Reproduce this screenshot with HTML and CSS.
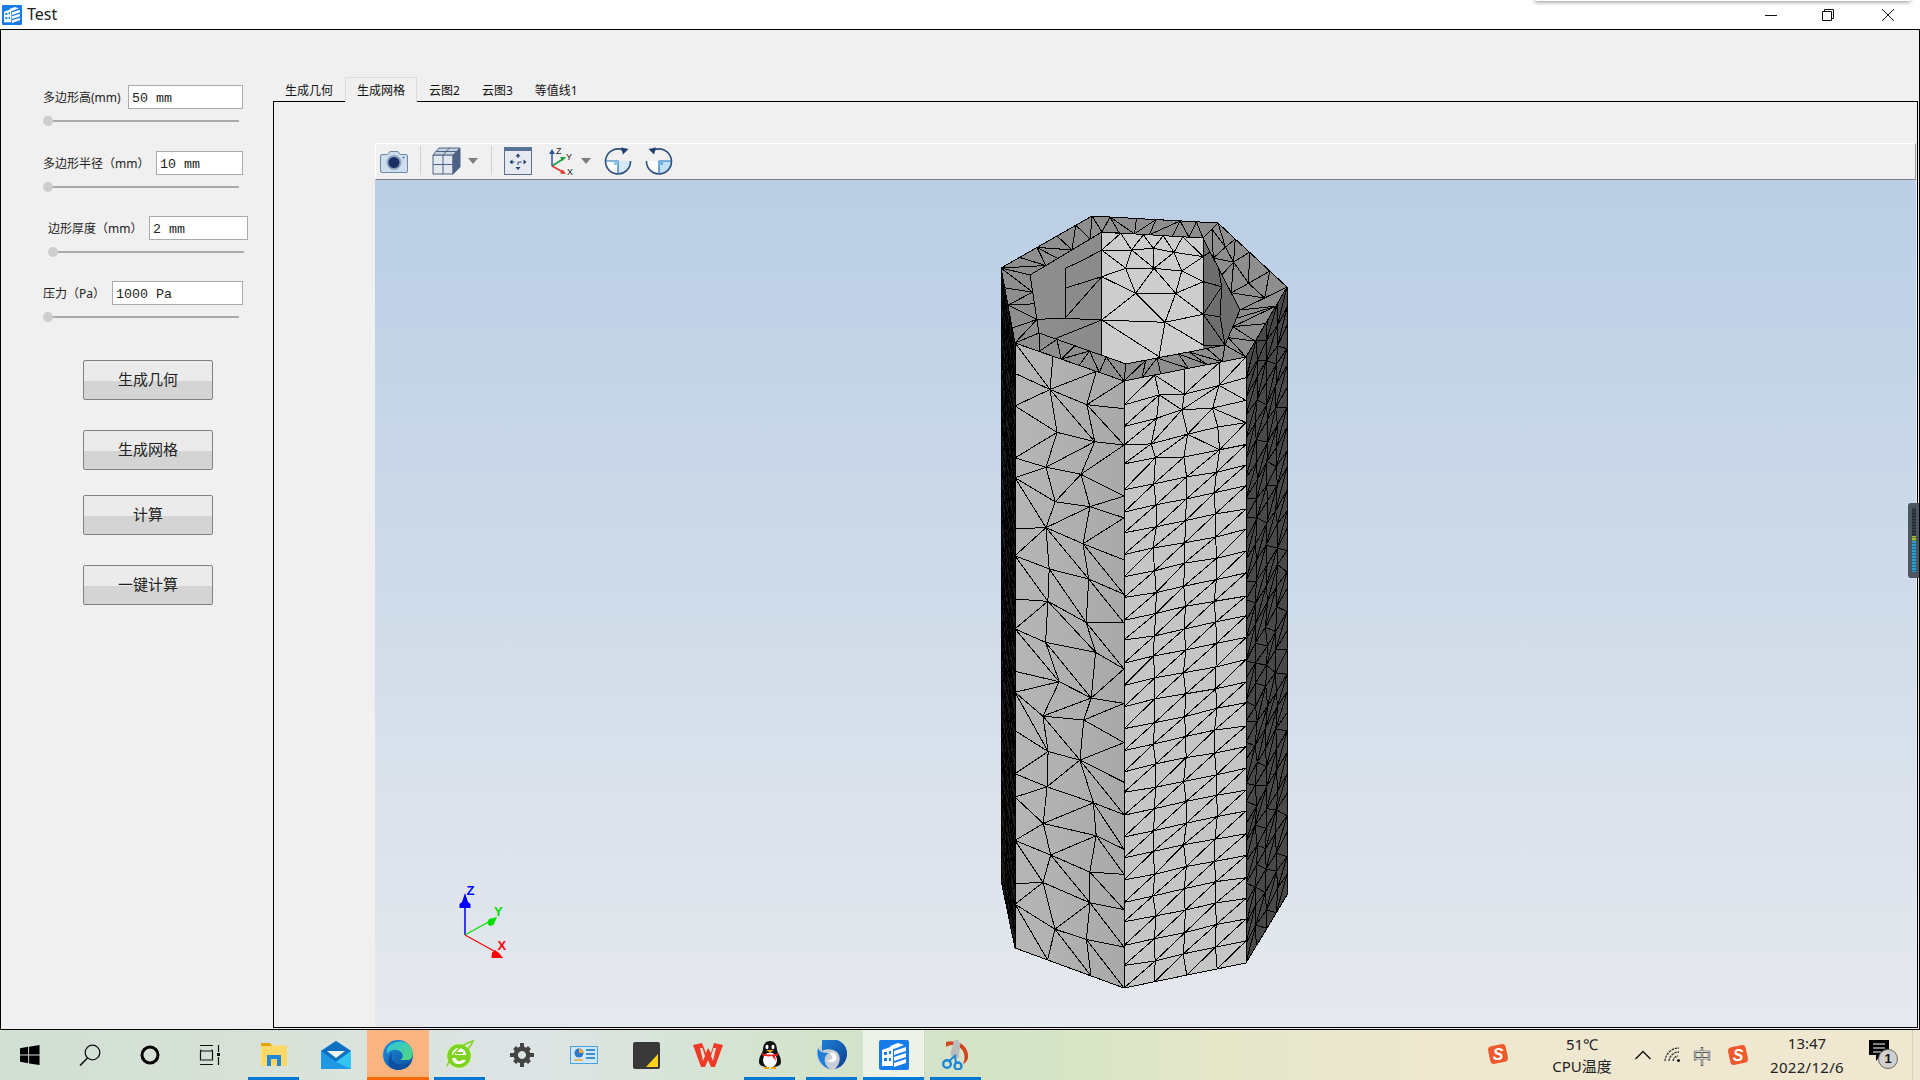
FILE: index.html
```html
<!DOCTYPE html>
<html lang="zh-CN">
<head>
<meta charset="utf-8">
<title>Test</title>
<link rel="stylesheet" href="styles.css">
</head>
<body>
<svg class="defs" width="0" height="0" aria-hidden="true">
  <defs>
    <symbol id="app" viewBox="0 0 30 30">
      <rect width="30" height="30" rx="2" fill="#167cec"/>
      <path d="M3 10 L14 6 V26 H3 Z" fill="#fff"/>
      <path d="M5 12h3v3H5zM10 11h2v3h-2zM5 18h3v3H5zM10 18h2v3h-2z" fill="#167cec"/>
      <path d="M11 6 L19 3 L25 5 L15 9 Z" fill="#fff"/>
      <path d="M15 11 L27 7 V11 L15 15 Z M15 17 L27 13 V17 L15 21 Z M15 23 L27 19 V23 L15 27 Z" fill="#fff"/>
    </symbol>
    <symbol id="sogou" viewBox="0 0 24 24">
      <rect x="3" y="3" width="18" height="18" rx="4" fill="#f0592b" transform="rotate(-12 12 12)"/>
      <text x="12" y="18" text-anchor="middle" class="sogou-s">S</text>
    </symbol>
    <linearGradient id="edgeA" x1="0" y1="0" x2="1" y2="1"><stop offset="0" stop-color="#2fc4e0"/><stop offset="1" stop-color="#55d67a"/></linearGradient>
    <linearGradient id="edgeB" x1="0" y1="0" x2="1" y2="1"><stop offset="0" stop-color="#1f8fe0"/><stop offset="1" stop-color="#0c4f9c"/></linearGradient>
    <linearGradient id="swirl" x1="0" y1="0" x2="1" y2="1"><stop offset="0" stop-color="#1d7fd8"/><stop offset="1" stop-color="#0c3f8a"/></linearGradient>
    <linearGradient id="leftFace" x1="0" y1="0" x2="1" y2="0"><stop offset="0" stop-color="#b6b6b6"/><stop offset="1" stop-color="#a9a9a9"/></linearGradient>
    <linearGradient id="leftWall" x1="0" y1="0" x2="1" y2="0"><stop offset="0" stop-color="#8f8f8f"/><stop offset="1" stop-color="#8a8a8a"/></linearGradient>
    <linearGradient id="mailG" x1="0" y1="0" x2="1" y2="1"><stop offset="0" stop-color="#1c9be6"/><stop offset="1" stop-color="#34c6f5"/></linearGradient>
  </defs>
</svg>

<header class="titlebar">
  <svg class="title-icon"><use href="#app"/></svg>
  <span class="title-text">Test</span>
  <div class="win-controls">
    <svg class="win-btn" viewBox="0 0 14 14"><path d="M1 7.5H13" stroke="#111" fill="none"/></svg>
    <svg class="win-btn" viewBox="0 0 14 14"><path d="M1.5 3.5H10.5V12.5H1.5Z M3.5 3.5V1.5H12.5V10.5H10.5" stroke="#111" fill="none"/></svg>
    <svg class="win-btn" viewBox="0 0 14 14"><path d="M1 1L13 13M13 1L1 13" stroke="#111" fill="none"/></svg>
  </div>
  <div class="shadow-strip"></div>
</header>

<main class="window">
  <aside class="panel">
    <section class="param">
      <div class="param-row"><span class="param-label">多边形高(mm)</span><div class="field w115">50 mm</div></div>
      <div class="slider"><i class="thumb"></i><i class="track"></i></div>
    </section>
    <section class="param second">
      <div class="param-row"><span class="param-label">多边形半径（mm）</span><div class="field w87">10 mm</div></div>
      <div class="slider"><i class="thumb"></i><i class="track"></i></div>
    </section>
    <section class="param shifted">
      <div class="param-row"><span class="param-label">边形厚度（mm）</span><div class="field w99">2 mm</div></div>
      <div class="slider"><i class="thumb"></i><i class="track"></i></div>
    </section>
    <section class="param">
      <div class="param-row"><span class="param-label">压力（Pa）</span><div class="field w131">1000 Pa</div></div>
      <div class="slider"><i class="thumb"></i><i class="track"></i></div>
    </section>
    <div class="actions">
      <button class="action gap30">生成几何</button>
      <button class="action gap25">生成网格</button>
      <button class="action gap30">计算</button>
      <button class="action">一键计算</button>
    </div>
  </aside>

  <section class="tabs">
    <nav class="tabbar">
      <span class="tab">生成几何</span>
      <span class="tab active">生成网格</span>
      <span class="tab tight">云图2</span>
      <span class="tab tight">云图3</span>
      <span class="tab tight">等值线1</span>
    </nav>
    <div class="pane">
      <div class="viewer">
        <div class="toolbar">
          <svg class="tool t-cam" viewBox="0 0 28 26">
            <path d="M2 6.5H8L10 3.5H18L20 6.5H26Q27.5 6.500 27.5 8V23Q27.500 24.500 26 24.500H2Q.5 24.500 .5 23V8Q.5 6.500 2 6.500Z" fill="#cfdeee" stroke="#6f88a8"/>
            <circle cx="14" cy="14.500" r="7.500" fill="#8fa4bf"/><circle cx="14" cy="14.500" r="5.500" fill="#1b2f66"/>
            <circle cx="23.500" cy="9.500" r="1" fill="#5b7597"/>
          </svg>
          <i class="sep s1"></i>
          <svg class="tool t-cube" viewBox="0 0 29 28">
            <path d="M1 8H21V27H1Z" fill="#e3e7ee" stroke="#4d6285"/>
            <path d="M1 8L7 1H28L21 8Z" fill="#c9d1dd" stroke="#4d6285"/>
            <path d="M21 8L28 1V20L21 27Z" fill="#4d6285" stroke="#4d6285"/>
            <path d="M1 17.500H21M11 8V27M4 4.500H24.500M11 8L17.500 1" fill="none" stroke="#4d6285"/>
          </svg>
          <i class="drop d1"></i>
          <i class="sep s2"></i>
          <svg class="tool t-fit" viewBox="0 0 28 28">
            <rect x=".5" y=".5" width="27" height="27" fill="#e6e9ef" stroke="#5a7196"/>
            <rect x="1" y="1" width="26" height="3" fill="#5a7196"/>
            <path d="M14 8V21M7.500 15H20.500" stroke="#1f3f70" stroke-dasharray="3 4" fill="none"/>
            <path d="M14 6.500l-2.500 3h5zM14 23l-2.500-3h5zM5.500 15l3-2.500v5zM22.500 15l-3-2.500v5z" fill="#1f3f70"/>
          </svg>
          <svg class="tool t-axes" viewBox="0 0 32 30">
            <path d="M6 20V6" stroke="#2a53a8" stroke-width="1.500" fill="none"/><path d="M6 3l-3 5h6z" fill="#2a53a8"/>
            <path d="M6 20L17 13" stroke="#1e9a3c" stroke-width="1.500" fill="none"/><path d="M20 11l-6 0 2.500 4z" fill="#1e9a3c"/>
            <path d="M6 20L17 26" stroke="#e0362c" stroke-width="1.500" fill="none"/><path d="M20 28l-6-.5 2.500-4z" fill="#e0362c"/>
            <text x="10" y="8" class="axis-small">Z</text><text x="20" y="14" class="axis-small">Y</text><text x="21" y="29" class="axis-small">X</text>
          </svg>
          <i class="drop d2"></i>
          <svg class="tool t-rot" viewBox="0 0 28 28">
            <path d="M1.500 14H14V26.500A12.500 12.500 0 0 1 1.500 14Z" fill="#fff"/><path d="M14 14H26.500A12.500 12.500 0 0 1 14 26.500Z" fill="#d5e9fa"/>
            <path d="M19 3A12.500 12.500 0 1 0 26.500 14" fill="none" stroke="#2f4f7c" stroke-width="1.600"/>
            <path d="M1.500 14H14V26" fill="none" stroke="#1b6fb8" stroke-width="1.200"/>
            <path d="M24.500 2L17 .5l2 7z" fill="#1f3f70"/><rect x="10" y="14" width="4" height="4" fill="#8cc4ee"/>
          </svg>
          <svg class="tool t-rot2" viewBox="0 0 28 28">
            <path d="M1.500 14H14V26.500A12.500 12.500 0 0 1 1.500 14Z" fill="#fff"/><path d="M14 14H26.500A12.500 12.500 0 0 1 14 26.500Z" fill="#bfe0f8"/>
            <path d="M9 3A12.500 12.500 0 1 1 1.500 14" fill="none" stroke="#2f4f7c" stroke-width="1.600"/>
            <path d="M26.500 14H14V26" fill="none" stroke="#1b6fb8" stroke-width="1.200"/>
            <path d="M3.500 2L11 .5l-2 7z" fill="#1f3f70"/><rect x="14" y="14" width="4" height="4" fill="#6cb2e8"/>
          </svg>
        </div>
        <div class="render">
          <svg id="scene" class="scene" viewBox="375 180 1541 847" xmlns="http://www.w3.org/2000/svg">
            <path d="M465 935V900" stroke="#0000ff" stroke-width="1.500" fill="none"/>
            <path d="M465 893l-3 9-2.500 2v4h11v-4l-2.500-2z" fill="#0000ff"/>
            <path d="M465 935L492 920" stroke="#00e000" stroke-width="1.200" fill="none"/>
            <path d="M497 917l-8 2-2 4 2.500 3 4-1z" fill="#00e000"/>
            <path d="M465 935L494 951" stroke="#ff0000" stroke-width="1.200" fill="none"/>
            <path d="M503 958l-4-5-4-3-3 2.500-.5 5.500z" fill="#ff0000"/>
            <text x="466.500" y="895" class="axis z">Z</text>
            <text x="494" y="916" class="axis y">Y</text>
            <text x="497.500" y="950" class="axis x">X</text>
          </svg>
        </div>
      </div>
    </div>
  </section>
  <div class="meter"><i class="leds"></i></div>
</main>

<footer class="taskbar">
  <div class="start-group">
    <div class="sys"><svg class="ic20" viewBox="0 0 22 22"><path d="M0 3.500L9 2V10.500H0ZM10 1.800L21.500 0V10.500H10ZM0 11.500H9V20L0 18.500ZM10 11.500H21.500V22L10 20.300Z" fill="#000"/></svg></div>
    <div class="sys"><svg class="ic22" viewBox="0 0 22 22"><circle cx="13.500" cy="8.500" r="7.300" fill="none" stroke="#111" stroke-width="1.300"/><path d="M8.500 14L1 21.500" stroke="#111" stroke-width="1.600"/></svg></div>
    <div class="sys"><svg class="ic22" viewBox="0 0 22 22"><circle cx="11" cy="11" r="8" fill="none" stroke="#000" stroke-width="3"/></svg></div>
    <div class="sys"><svg class="ic22" viewBox="0 0 22 22"><path d="M1 1.500H14M1 20.500H14M2 5.500V7H13V5.500M1.500 6.500V16H13.500V6.500M1 16H14M19.500 1V8M19.500 13V21" stroke="#111" stroke-width="1.200" fill="none"/><rect x="18" y="9" width="3" height="3" fill="#111"/></svg></div>
  </div>
  <div class="apps">
    <div class="app run"><svg class="ic30" viewBox="0 0 30 30"><path d="M2 3H11L14 5.500H28V26H2Z" fill="#ffd968"/><path d="M2 3H11L13 6H2Z" fill="#e2a60f"/><path d="M8 26V15H22V26H18V19H12V26Z" fill="#1f86d8"/></svg></div>
    <div class="app"><svg class="ic30" viewBox="0 0 30 30"><path d="M0 11L15 1L30 11V29H0Z" fill="url(#mailG)"/><path d="M0 11L15 1L30 11L15 22Z" fill="#0f6fc0"/><path d="M6 11H24L15 18Z" fill="#eef2f6"/><path d="M0 11L15 22L30 11V29H0Z" fill="#1f97e2"/><path d="M15 22L30 11V29Z" fill="#33c4f5"/></svg></div>
    <div class="app edge"><svg class="ic30" viewBox="0 0 30 30"><circle cx="15" cy="15" r="15" fill="url(#edgeB)"/><path d="M4 9C8 0 24-2 29 9 31 15 29 20 24 20H16C20 20 21 15 18 12 13 8 6 10 4 14Z" fill="url(#edgeA)"/><path d="M15 30C6 30 2 20 9 13 6 22 15 26 22 24 26 23 28 22 29 21 27 26 22 30 15 30Z" fill="#0b4f9e"/></svg></div>
    <div class="app run"><svg class="ic30" viewBox="0 0 30 30"><circle cx="14" cy="16" r="12.500" fill="#7ed321" stroke="#d9efc0" stroke-width="1.500"/><path d="M7 15H21C21 10 17 8 14 8 10 8 7 11 7 15ZM7 18C8 23 11 24 14 24 17 24 19 23 21 20H17C16 21 15 21 14 21 12 21 11 20 11 18Z" fill="#fff"/><rect x="11" y="12" width="7" height="2" fill="#7ed321"/><path d="M2 26C8 12 18 4 28 1 26 6 24 8 22 9" fill="none" stroke="#7ed321" stroke-width="1.500"/></svg></div>
    <div class="app"><svg class="ic24" viewBox="0 0 24 24"><path d="M12 3.500a8.500 8.500 0 1 0 .01 0ZM12 8a4 4 0 1 1-.01 0Z" fill="#444" fill-rule="evenodd"/><path d="M10 0h4v5h-4zM10 19h4v5h-4zM0 10h5v4H0zM19 10h5v4h-5zM3 6l3-3 3.500 3.500-3 3zM21 6l-3-3-3.500 3.500 3 3zM3 18l3 3 3.500-3.500-3-3zM21 18l-3 3-3.500-3.500 3-3z" fill="#444"/></svg></div>
    <div class="app"><svg class="ic28" viewBox="0 0 28 20"><rect width="28" height="18" y="1" fill="#4aa3df"/><rect x="1" y="2" width="26" height="16" fill="#cfe7f7"/><circle cx="9" cy="8" r="4.500" fill="#2b78c9"/><path d="M9 8V3.500A4.500 4.500 0 0 1 13.500 8Z" fill="#f3a43a"/><path d="M16 4H25V6H16ZM16 8H25V10H16ZM16 12H25V14H16Z" fill="#3d8fd0"/><path d="M4 15H13" stroke="#f3a43a" stroke-width="1.500"/></svg></div>
    <div class="app"><svg class="ic27" viewBox="0 0 27 27"><rect width="27" height="27" rx="2" fill="#383838"/><path d="M13 25L25 12V25Z" fill="#fcd116"/></svg></div>
    <div class="app"><svg class="ic30w" viewBox="0 0 30 24"><path d="M0 2L9 0 13 10 15 5 18 10 21 0 30 2 22 24H18L15 17 12 24H8ZM7 5L10 18 12 13 9.500 5ZM23 5H20.500L18 13 20 18Z" fill="#ee3a26" fill-rule="evenodd"/></svg></div>
    <div class="app run"><svg class="ic30" viewBox="0 0 30 30"><path d="M4 22C4 16 7 14 8 10 8 4 11 1 15 1S22 4 22 10C23 14 26 16 26 22 26 26 22 27 15 27S4 26 4 22Z" fill="#111"/><ellipse cx="15" cy="20" rx="7" ry="7.500" fill="#fff"/><ellipse cx="12" cy="7" rx="1.500" ry="2.200" fill="#fff"/><ellipse cx="18" cy="7" rx="1.500" ry="2.200" fill="#fff"/><path d="M11 10H19L15 12.500Z" fill="#f7b500"/><path d="M7 13C12 15 18 15 23 13L22.500 16 20 16 21 21 17 16C13 17 10 16 7.500 15.500Z" fill="#e5231b"/><path d="M9 27H14V29H9ZM16 27H21V29H16Z" fill="#f7a600"/></svg></div>
    <div class="app run"><svg class="ic30" viewBox="0 0 30 30"><circle cx="15" cy="15" r="15" fill="#c9ced6"/><path d="M5 0H20C29 3 32 12 29 19 27 25 22 28 18 29 25 22 24 12 16 10 10 8 5 11 5 11Z" fill="url(#swirl)"/><path d="M1 8C-1 16 3 26 13 29 6 24 6 16 12 13 5 13 2 11 1 8Z" fill="#1d7fd8"/><path d="M12 13C17 11 21 15 19 20 17 23 12 23 10 20 13 21 16 19 15 16 14 14 13 13 12 13Z" fill="#fff"/></svg></div>
    <div class="app current run"><svg class="ic30" ><use href="#app"/></svg></div>
    <div class="app run"><svg class="ic30" viewBox="0 0 30 30"><path d="M5 2C12 0 25 2 27 14 28 19 25 23 22 24 25 18 24 9 16 6 12 4 8 5 5 7Z" fill="#d2451e"/><path d="M16 1L13 16 11 14 14 2ZM18 2L16 18" stroke="#bbb" stroke-width="3" fill="none"/><circle cx="6" cy="24" r="3.800" fill="none" stroke="#1c86d8" stroke-width="2.400"/><circle cx="17" cy="26" r="3.500" fill="none" stroke="#1c86d8" stroke-width="2.400"/><path d="M8 21L15 15M15 23L14 16" stroke="#1c86d8" stroke-width="2"/></svg></div>
  </div>
  <div class="tray">
    <div class="t-s1"><svg class="ic24"><use href="#sogou"/></svg></div>
    <div class="temp"><span>51℃</span><span>CPU温度</span></div>
    <div class="t-chev"><svg class="ic18" viewBox="0 0 18 18"><path d="M1.500 13L9 5.500L16.500 13" fill="none" stroke="#111" stroke-width="1.400"/></svg></div>
    <div class="t-wifi"><svg class="ic18" viewBox="0 0 18 18"><path d="M1 15A14 14 0 0 1 15 2M5 15A10 10 0 0 1 15 6M9 15A6 6 0 0 1 14 10" fill="none" stroke="#333" stroke-width="1.300" stroke-dasharray="2.500 .8"/><circle cx="14.500" cy="14.500" r="1.600" fill="#222"/></svg></div>
    <div class="t-zh">中</div>
    <div class="t-s2"><svg class="ic24"><use href="#sogou"/></svg></div>
    <div class="clock"><span>13:47</span><span>2022/12/6</span></div>
    <div class="notify"><svg class="bubble" viewBox="0 0 20 22"><path d="M0 0H20V15H12L7 21V15H0Z" fill="#000"/><path d="M4 4H16M4 8H16M4 12H12" stroke="#fff" fill="none"/></svg><b class="badge">1</b></div>
    <i class="tray-end"></i>
  </div>
</footer>
<script src="mesh.js"></script>
</body>
</html>
```

FILE: styles.css
```css
* { box-sizing: border-box; }
html, body { margin: 0; padding: 0; }
body {
  width: 1920px;
  height: 1080px;
  overflow: hidden;
  display: flex;
  flex-direction: column;
  background: #f0f0f0;
  font-family: "Noto Sans", "Noto Sans CJK SC", sans-serif;
  color: #111;
}
.defs { position: absolute; }
.sogou-s { font: italic 900 16px "Liberation Sans", sans-serif; fill: #fff; }

/* title bar */
.titlebar {
  position: relative;
  height: 29px;
  flex: none;
  background: #fff;
  display: flex;
  align-items: center;
  padding-left: 2px;
}
.title-icon { width: 20px; height: 20px; }
.title-text { margin-left: 5px; font-size: 16px; line-height: 29px; color: #222; }
.win-controls { margin-left: auto; display: flex; margin-right: 25px; }
.win-btn { width: 14px; height: 14px; margin-left: 43px; }
.win-btn:last-child { margin-left: 46px; }
.shadow-strip {
  position: absolute;
  left: 1535px;
  top: -4px;
  width: 375px;
  height: 5px;
  background: #fff;
  box-shadow: 0 1px 4px rgba(0,0,0,.45);
}

/* window */
.window {
  position: relative;
  flex: none;
  height: 1001px;
  border: 1px solid #000;
  background: #f0f0f0;
  display: flex;
}
.panel {
  width: 272px;
  flex: none;
  padding: 55px 0 0 42px;
  display: flex;
  flex-direction: column;
}
.param { width: 200px; height: 65px; }
.second { margin-top: 1px; }
.shifted { margin-left: 5px; }
.param-row { display: flex; justify-content: space-between; align-items: center; height: 24px; }
.param-label { font-size: 12px; color: #222; white-space: nowrap; }
.field {
  height: 24px;
  background: #fff;
  border: 1px solid #aaa;
  font: 13.300px/25px "Liberation Mono", monospace;
  color: #222;
  padding-left: 3px;
  white-space: pre;
}
.w115 { width: 115px; }
.w87 { width: 87px; }
.w99 { width: 99px; }
.w131 { width: 131px; }
.slider { display: flex; align-items: center; width: 196px; height: 10px; margin-top: 7px; }
.thumb { width: 10px; height: 10px; border-radius: 50%; background: #cdcdcd; flex: none; }
.track { flex: 1; height: 2px; background: #aaa; }
.actions { display: flex; flex-direction: column; margin-top: 14px; margin-left: 40px; }
.action {
  width: 130px;
  height: 40px;
  border: 1px solid #808080;
  border-radius: 2px;
  padding: 0 0 3px;
  background: linear-gradient(#ebebeb 0 52%, #d4d4d4 52% 100%);
  font: 15px "Noto Sans CJK SC", sans-serif;
  color: #222;
}
.gap30 { margin-bottom: 30px; }
.gap25 { margin-bottom: 25px; }

/* tabs */
.tabs { flex: 1; display: flex; flex-direction: column; padding: 47px 1px 1px 0; min-width: 0; }
.tabbar { display: flex; height: 24px; flex: none; }
.tab { padding: 0 12px; font-size: 12px; line-height: 27px; color: #111; white-space: nowrap; }
.tab.tight { padding: 0 10px 0 12px; }
.tab.active { border: 1px solid #dcdcdc; border-bottom: 0; line-height: 25px; padding: 0 11px; background: #f0f0f0; position: relative; height: 25px; }
.pane { flex: 1; border: 1px solid #000; padding: 41px 1px 0 101px; display: flex; min-height: 0; }
.viewer { flex: 1; display: flex; flex-direction: column; min-width: 0; }
.toolbar {
  height: 37px;
  flex: none;
  position: relative;
  display: flex;
  align-items: center;
  padding-bottom: 2px;
  background: #f0f0f0;
  border-top: 1px solid #fff;
  border-left: 1px solid #fff;
  border-right: 1px solid #9a9a9a;
  border-bottom: 1px solid #808080;
}
.tool { flex: none; display: block; }
.t-cam { width: 28px; height: 26px; margin-left: 4px; }
.sep { width: 1px; height: 29px; background: #d0d0d0; flex: none; }
.s1 { margin-left: 12px; }
.t-cube { width: 29px; height: 28px; margin-left: 11px; }
.drop { width: 0; height: 0; border-left: 5px solid transparent; border-right: 5px solid transparent; border-top: 6px solid #7d7d7d; flex: none; }
.d1 { margin-left: 7px; }
.s2 { margin-left: 13px; }
.t-fit { width: 28px; height: 28px; margin-left: 12px; }
.t-axes { width: 32px; height: 30px; margin-left: 14px; }
.d2 { margin-left: 3px; }
.t-rot { width: 28px; height: 28px; margin-left: 13px; }
.t-rot2 { width: 28px; height: 28px; margin-left: 13px; }
.render { flex: 1; min-height: 0; background: linear-gradient(#bacee5, #e6e9ee); }
.scene { display: block; width: 100%; height: 100%; }
.axis { font: 700 13px "Liberation Sans", sans-serif; }
.axis.z { fill: #0000ff; }
.axis.y { fill: #00e000; }
.axis.x { fill: #ff0000; }
.axis-small { font: 9px "Liberation Sans", sans-serif; fill: #222; }
.meter {
  position: absolute;
  right: 0;
  top: 473px;
  width: 11px;
  height: 75px;
  background: #4c5661;
  border-radius: 3px 0 0 3px;
  padding: 5px 0 0 4px;
}
.leds {
  display: block;
  width: 4px;
  height: 64px;
  background:
    repeating-linear-gradient(transparent 0 2px, rgba(0,0,0,.35) 2px 3px),
    linear-gradient(#333b44 0 44%, #9fc03a 44% 52%, #2a9fd6 52% 100%);
}

/* taskbar */
.taskbar {
  flex: 1;
  display: flex;
  align-items: stretch;
  background: linear-gradient(90deg, #d2dfd3 0%, #d8e2d8 15%, #dde4e6 27%, #d3e3cc 42%, #d6e4c6 55%, #e4e7c8 63%, #efe8d0 76%, #efe7cf 100%);
}
.start-group { display: flex; width: 243px; flex: none; }
.sys { width: 60px; display: flex; align-items: center; justify-content: center; }
.apps { display: flex; flex: none; }
.app { position: relative; width: 62px; display: flex; align-items: center; justify-content: center; }
.app.run::after { content: ""; position: absolute; left: 5px; right: 6px; bottom: 0; height: 3px; background: #0078d4; }
.app.edge { background: #f9b47f; }
.app.edge::after { content: ""; position: absolute; left: 0; right: 0; bottom: 0; height: 3px; background: #ff6a00; }
.app.current { background: rgba(255,255,255,.55); border-right: 1px solid #c9d9c2; }
.app.current.run::after { left: 0; right: 0; }
.ic20 { width: 20px; height: 20px; }
.ic22 { width: 22px; height: 22px; }
.ic24 { width: 24px; height: 24px; }
.ic27 { width: 27px; height: 27px; }
.ic28 { width: 28px; height: 20px; }
.ic30 { width: 30px; height: 30px; }
.ic30w { width: 30px; height: 24px; }
.ic18 { width: 18px; height: 18px; }
.tray { margin-left: auto; display: flex; align-items: center; font-size: 15px; color: #222; width: 442px; flex: none; }
.t-s1 { width: 40px; display: flex; justify-content: center; margin-bottom: 3px; }
.temp { width: 90px; margin-left: 19px; display: flex; flex-direction: column; align-items: center; line-height: 22px; }
.t-chev { width: 30px; display: flex; justify-content: center; margin-left: 1px; }
.t-wifi { width: 30px; display: flex; justify-content: center; }
.t-zh { width: 28px; text-align: center; font: 19px "Noto Sans CJK SC", sans-serif; color: #fff; -webkit-text-stroke: .6px #333; }
.t-s2 { width: 42px; display: flex; justify-content: center; margin-left: 1px; }
.clock { width: 90px; margin-left: 3px; display: flex; flex-direction: column; align-items: center; line-height: 24px; }
.clock span:last-child { letter-spacing: .3px; }
.notify { position: relative; width: 53px; height: 40px; }
.bubble { position: absolute; left: 17px; top: 5px; width: 20px; height: 22px; }
.badge {
  position: absolute;
  left: 26px;
  top: 14px;
  width: 20px;
  height: 20px;
  border-radius: 50%;
  border: 1px solid #666;
  background: #d0d0d0;
  font: 700 13px/18px "Liberation Sans", sans-serif;
  text-align: center;
  color: #111;
}
.tray-end { width: 1px; height: 100%; background: #d8d2bd; margin-left: 7px; flex: none; }
```

FILE: mesh.js
```js
(function () {
  var NS = 'http://www.w3.org/2000/svg';
  var scene = document.getElementById('scene');
  var seed = 12345;
  function rnd() { seed = (seed * 1664525 + 1013904223) % 4294967296; return seed / 4294967296; }
  function j(a) { return (rnd() - 0.5) * 2 * a; }
  function z(p) { return [980 + p[0] / 3, 200 + p[1] / 3]; }
  function lerp(a, b, t) { return [a[0] + (b[0] - a[0]) * t, a[1] + (b[1] - a[1]) * t]; }

  function el(name, attrs, parent) {
    var e = document.createElementNS(NS, name);
    for (var k in attrs) e.setAttribute(k, attrs[k]);
    (parent || scene).appendChild(e);
    return e;
  }
  function seg(a, b) { return 'M' + a[0].toFixed(1) + ' ' + a[1].toFixed(1) + 'L' + b[0].toFixed(1) + ' ' + b[1].toFixed(1); }

  function faceMesh(q, nx, ny, opt) {
    var pts = [], d = '', i, k;
    for (i = 0; i <= nx; i++) {
      pts[i] = [];
      for (k = 0; k <= ny; k++) {
        var v = k / ny, u = i / nx, amp = opt.jit;
        if (opt.topBoost && v < opt.topBoost) amp *= opt.boost;
        if (i > 0 && i < nx) u += j(amp) / nx;
        if (k > 0 && k < ny) v += j(amp) / ny;
        pts[i][k] = lerp(lerp(q[0], q[1], u), lerp(q[3], q[2], u), v);
      }
    }
    for (i = 0; i <= nx; i++) for (k = 0; k <= ny; k++) {
      if (i < nx) d += seg(pts[i][k], pts[i + 1][k]);
      if (k < ny) d += seg(pts[i][k], pts[i][k + 1]);
      if (i < nx && k < ny) {
        var up = opt.diag === 'up' ? true : rnd() < 0.5;
        if (opt.diag === 'up' && opt.topBoost && k / ny < opt.topBoost) up = rnd() < 0.6;
        d += up ? seg(pts[i][k + 1], pts[i + 1][k]) : seg(pts[i][k], pts[i + 1][k + 1]);
      }
    }
    return d;
  }
  function poly(q, fill) {
    el('polygon', { points: q.map(function (p) { return p.join(','); }).join(' '), fill: fill });
  }
  function lines(d, parent) {
    el('path', { d: d, fill: 'none', stroke: '#000', 'stroke-width': 1, 'shape-rendering': 'crispEdges' }, parent);
  }

  var O = [[1001,268],[1092,216],[1218,223],[1287,287],[1246,357],[1124,381],[1015,343]];
  var I = [[1030,275],[1102,232],[1203,238],[1240,310],[1225,345],[1126,364],[1039,333]];

  /* outer faces */
  var sliver = [[1001,268],[1015,343],[1015,948],[1001,880]];
  var left = [[1015,343],[1124,381],[1124,988],[1015,948]];
  var front = [[1124,381],[1246,357],[1246,963],[1124,988]];
  var right = [[1246,357],[1287,287],[1287,895],[1246,963]];

  poly(sliver, '#1c1c1c');
  lines(faceMesh(sliver, 3, 42, { jit: .25 }));
  poly(left, 'url(#leftFace)');
  lines(faceMesh(left, 3, 17, { jit: .24 }));
  poly(front, '#c5c5c5');
  lines(faceMesh(front, 4, 28, { jit: .06, diag: 'up', topBoost: .17, boost: 3 }));
  poly(right, '#484848');
  lines(faceMesh(right, 4, 30, { jit: .12 }));

  /* hole walls */
  var defs = document.createElementNS(NS, 'defs');
  scene.appendChild(defs);
  var clip = el('clipPath', { id: 'hole' }, defs);
  el('polygon', { points: I.map(function (p) { return p.join(','); }).join(' ') }, clip);
  var g = el('g', { 'clip-path': 'url(#hole)' });
  el('rect', { x: 1020, y: 225, width: 82, height: 150, fill: 'url(#leftWall)' }, g);
  el('rect', { x: 1102, y: 225, width: 101, height: 150, fill: '#cdcdcd' }, g);
  el('rect', { x: 1203, y: 225, width: 50, height: 150, fill: '#6e6e6e' }, g);

  var P = {
    a:[365,97],b:[422,100],c:[490,104],d:[550,107],e:[608,110],f:[670,115],
    g:[365,150],h:[455,150],i:[520,145],j:[582,157],k:[670,170],
    l:[437,205],m:[522,205],n:[605,213],o:[365,230],p:[467,280],q:[587,280],r:[670,245],
    s:[365,360],t:[555,367],u:[670,343],x:[537,470],y:[670,435],
    A:[300,185],B:[255,205],C:[255,265],D:[255,355],E:[170,358],F:[215,420],
    G:[705,145],H:[725,260],J:[720,350],K:[735,435]
  };
  var E = 'ag ab bg bh ch ci di dj ej ek fk fy gh hi ij jk gl hl hm im jm jn kn lm mn ol lp mp mq nq nr op pq qr os ps pt qt qu ru st tu sx tx ty gA AB oC oD BC BD ED sD sF ' +
          'fG kG GH rH uH uJ HJ JK uK yK';
  var d = '';
  E.split(' ').forEach(function (s) { if (s) d += seg(z(P[s[0]]), z(P[s[1]])); });
  lines(seg(z(P.a), z([365, 480])) + d, g);

  /* rim */
  var ringD = 'M' + O.join('L') + 'Z M' + I.join('L') + 'Z';
  el('path', { d: ringD, fill: '#8e8e8e', 'fill-rule': 'evenodd' });
  var mesh = '';
  var rows = [1, 1, 2, 1, 1, 1, 1];
  for (var n = 0; n < O.length; n++) {
    var m = (n + 1) % O.length;
    var len = Math.hypot(O[m][0] - O[n][0], O[m][1] - O[n][1]);
    mesh += faceMesh([O[n], O[m], I[m], I[n]], Math.max(2, Math.round(len / 21)), rows[n], { jit: .2 });
  }
  lines(mesh);
})();
```
